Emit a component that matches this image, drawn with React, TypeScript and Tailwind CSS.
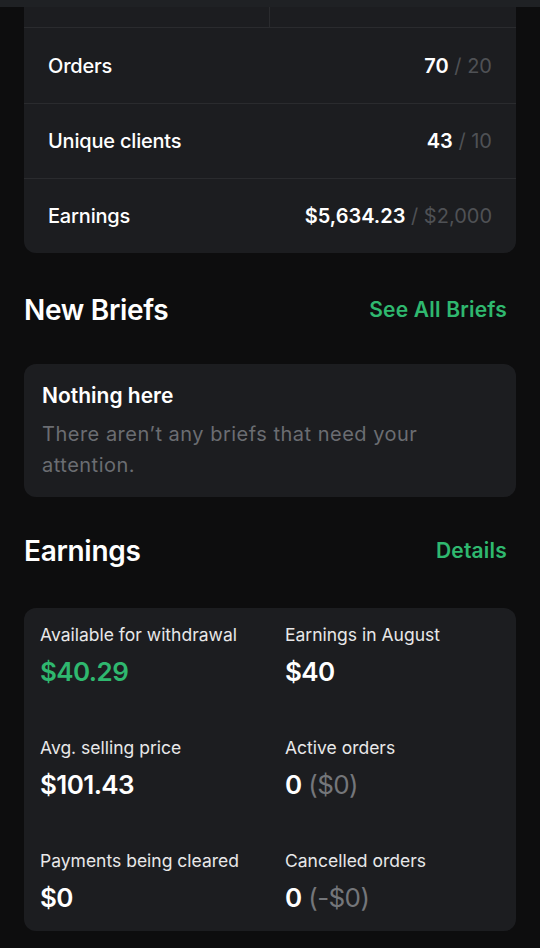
import React from "react";

const targets = [
  { label: "Orders", value: "70", goal: "20" },
  { label: "Unique clients", value: "43", goal: "10" },
  { label: "Earnings", value: "$5,634.23", goal: "$2,000" },
];

const stats = [
  { label: "Available for withdrawal", value: "$40.29", green: true },
  { label: "Earnings in August", value: "$40" },
  { label: "Avg. selling price", value: "$101.43" },
  { label: "Active orders", value: "0", extra: "($0)" },
  { label: "Payments being cleared", value: "$0" },
  { label: "Cancelled orders", value: "0", extra: "(-$0)" },
];

export default function App() {
  return (
    <div
      className="min-h-[948px] bg-[#0d0d0e] text-white pb-4"
      style={{ fontFamily: "Inter, 'Noto Sans', sans-serif" }}
    >
      <div className="h-[7px] bg-[#1f2124]" />

      <div className="mx-6 bg-[#1c1d20] rounded-b-xl">
        <div className="grid grid-cols-2 h-[21px] border-b border-[#2a2b2e]">
          <div className="border-r border-[#2a2b2e]" />
          <div />
        </div>
        {targets.map((t, i) => (
          <div
            key={t.label}
            className={
              "flex items-center justify-between px-6 h-[75px] " +
              (i > 0 ? "border-t border-[#2a2b2e]" : "")
            }
          >
            <span className="text-[20px] font-medium tracking-[-0.2px]">{t.label}</span>
            <span className="text-[20px]">
              <span className="font-semibold">{t.value}</span>
              <span className="text-[#4f5155]"> / {t.goal}</span>
            </span>
          </div>
        ))}
      </div>

      <div className="flex items-center justify-between px-6 pr-[33px] mt-[39px] h-[36px]">
        <h2 className="text-[28px] font-semibold tracking-[-0.3px]">New Briefs</h2>
        <a className="text-[21px] font-semibold text-[#2fb86f] tracking-[0.2px]">See All Briefs</a>
      </div>

      <div className="mx-6 mt-[36px] bg-[#1c1d20] rounded-xl px-[18px] pt-[18px] pb-[16px]">
        <p className="text-[21px] font-semibold leading-[28px]">Nothing here</p>
        <p className="mt-[9px] text-[20px] leading-[31px] tracking-[0.5px] text-[#6b6d72] pr-20">
          There aren’t any briefs that need your attention.
        </p>
      </div>

      <div className="flex items-center justify-between px-6 pr-[33px] mt-[36px] h-[36px]">
        <h2 className="text-[28px] font-semibold tracking-[-0.3px]">Earnings</h2>
        <a className="text-[21px] font-semibold text-[#2fb86f] tracking-[0.2px]">Details</a>
      </div>

      <div className="mx-6 mt-[39px] bg-[#1c1d20] rounded-xl px-4 pt-[14px] pb-[15px] grid grid-cols-[245px_1fr] gap-y-[45px]">
        {stats.map((s) => (
          <div key={s.label}>
            <p className="text-[17.5px] leading-[26px] text-[#e8e8e9]">{s.label}</p>
            <p
              className={
                "mt-[6px] text-[26px] leading-[36px] font-semibold tracking-[-0.6px] " +
                (s.green ? "text-[#2fb86f]" : "text-white")
              }
            >
              {s.value}
              {s.extra && <span className="font-normal text-[#74767a]"> {s.extra}</span>}
            </p>
          </div>
        ))}
      </div>
    </div>
  );
}
